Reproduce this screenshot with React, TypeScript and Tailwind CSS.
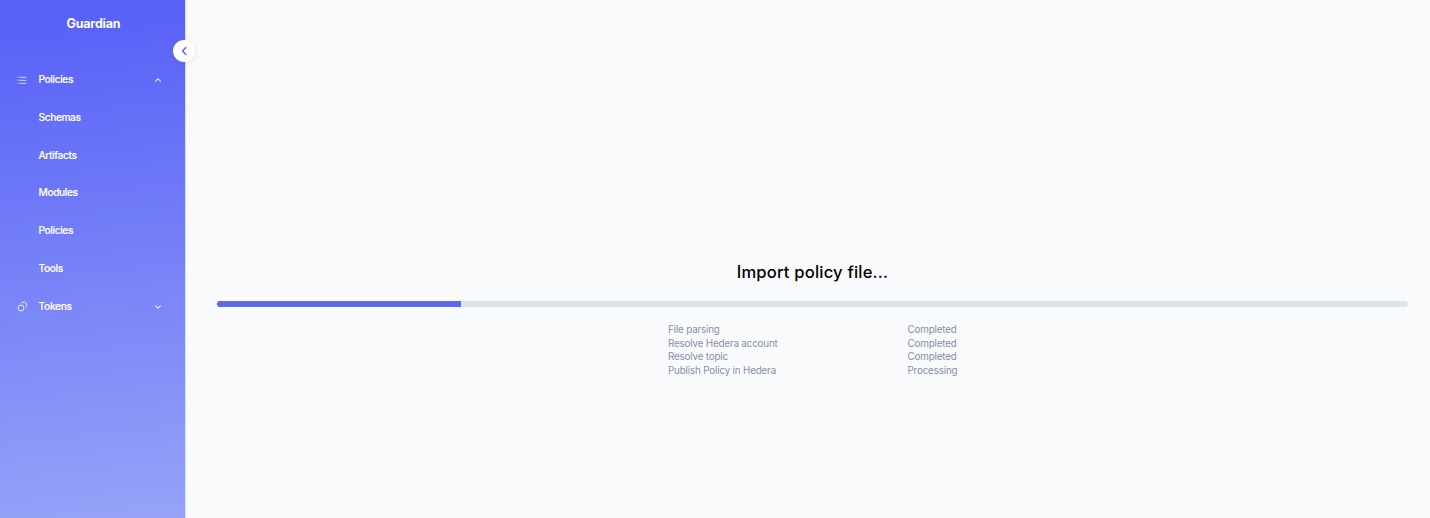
const children = ['Schemas', 'Artifacts', 'Modules', 'Policies', 'Tools'];

const steps = [
  { name: 'File parsing', status: 'Completed' },
  { name: 'Resolve Hedera account', status: 'Completed' },
  { name: 'Resolve topic', status: 'Completed' },
  { name: 'Publish Policy in Hedera', status: 'Processing' },
];

function ListIcon() {
  return (
    <svg width="10" height="8" viewBox="0 0 10 8" fill="none" stroke="white" strokeOpacity="0.85" strokeWidth="0.9">
      <path d="M2.7 1.3H9.3M2.7 4.3H9.3M2.7 7.3H9.3M0.6 1.3H1.6M0.6 4.3H1.6M0.6 7.3H1.6" />
    </svg>
  );
}

function TokensIcon() {
  return (
    <svg width="11" height="11" viewBox="0 0 11 11" fill="none" stroke="white" strokeOpacity="0.85" strokeWidth="0.95">
      <circle cx="4" cy="7" r="3" />
      <path d="M4 2.6A3.1 3.1 0 1 1 8.5 6.7" />
    </svg>
  );
}

function Chevron({ up = false }: { up?: boolean }) {
  return (
    <svg width="8" height="8" viewBox="0 0 8 8" fill="none" stroke="white" strokeOpacity="0.85" strokeWidth="1.1" strokeLinecap="round" strokeLinejoin="round">
      <path d={up ? 'M1.6 5.1L4 2.9L6.4 5.1' : 'M1.6 2.9L4 5.1L6.4 2.9'} />
    </svg>
  );
}

function Sidebar() {
  return (
    <aside className="relative flex w-[186px] shrink-0 flex-col border-r border-[#d9dcfd] bg-[linear-gradient(174deg,#5962f7_6%,#95a2f8_98%)] text-white">
      <h1 className="pt-[14px] pl-[66.5px] text-[12.5px] leading-5 font-bold tracking-[-0.2px]">Guardian</h1>
      <button
        aria-label="Collapse menu"
        className="absolute top-[40px] left-[173px] flex size-[22px] items-center justify-center rounded-full bg-white shadow-[0_1px_5px_rgba(0,0,0,0.1)]"
      >
        <svg width="10" height="12" viewBox="0 0 10 12" fill="none" stroke="#6069ee" strokeWidth="1.5" strokeLinecap="round" strokeLinejoin="round">
          <path d="M6.8 2.5L3.6 6L6.8 9.5" />
        </svg>
      </button>
      <nav className="mt-[26.6px] flex flex-col text-[10.2px] font-medium tracking-[-0.4px] [-webkit-text-stroke:0.15px_white]">
        <div className="flex h-[37.85px] items-center pr-[23px] pl-[17px]">
          <span className="flex w-[21.5px]"><ListIcon /></span>
          <span className="flex-1">Policies</span>
          <Chevron up />
        </div>
        {children.map((label) => (
          <div key={label} className="flex h-[37.85px] items-center pl-[38.5px]">{label}</div>
        ))}
        <div className="flex h-[37.85px] items-center pr-[23px] pl-[17px]">
          <span className="flex w-[21.5px]"><TokensIcon /></span>
          <span className="flex-1 tracking-[-0.3px]">Tokens</span>
          <Chevron />
        </div>
      </nav>
    </aside>
  );
}

export default function App() {
  return (
    <div className="flex h-[518px] w-full overflow-hidden bg-[#f9fafc] font-['Inter','Liberation_Sans',sans-serif]">
      <Sidebar />
      <main className="flex min-w-0 flex-1 flex-col items-center pt-[260px] pr-[22px] pl-[31px]">
        <h2 className="text-[16.6px] leading-6 font-medium tracking-[0.18px] whitespace-nowrap text-black">Import policy file...</h2>
        <div className="mt-[17px] h-[6px] w-full overflow-hidden rounded-full bg-[#dfe2e6]">
          <div className="h-full w-[20.5%] bg-[#5b67ef]" />
        </div>
        <div className="mt-[16px] flex w-[289px] flex-col text-[9.8px] leading-[13.6px] tracking-[-0.16px] text-[#848fa9]">
          {steps.map((step) => (
            <div key={step.name} className="flex">
              <span className="w-[239.5px] shrink-0">{step.name}</span>
              <span className="whitespace-nowrap">{step.status}</span>
            </div>
          ))}
        </div>
      </main>
    </div>
  );
}
